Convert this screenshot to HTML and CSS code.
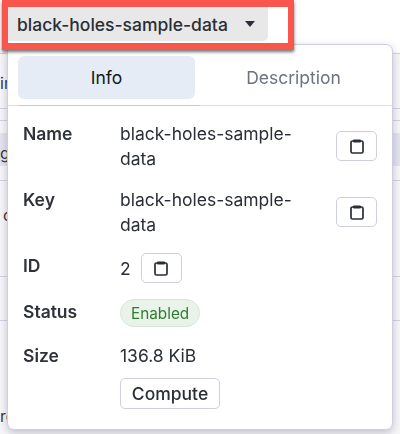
FILE: index.html
```html
<!DOCTYPE html>
<html lang="en">
<head>
<meta charset="utf-8">
<title>black-holes-sample-data</title>
<link rel="stylesheet" href="styles.css">
</head>
<body>
<div class="page">
  <div class="bg-row bg-a"><span>ir</span></div>
  <div class="bg-row bg-b"></div>
  <div class="bg-row bg-c"><span class="bg-stripe">gu</span></div>
  <div class="bg-row bg-d"><span class="bg-indent">c</span></div>
  <div class="bg-row bg-e"></div>
  <div class="bg-row bg-f"><span>rc</span></div>
</div>

<div class="annotation">
  <button class="trigger" type="button">
    <span>black-holes-sample-data</span>
    <svg class="caret" width="10" height="6" viewBox="0 0 10 6"><path d="M0 0h10L5 6z" fill="#2a2e36"/></svg>
  </button>
</div>

<section class="popover">
  <div class="tabs">
    <div class="tab tab-active">Info</div>
    <div class="tab">Description</div>
  </div>
  <dl class="info">
    <dt class="label">Name</dt>
    <dd class="value value-wrap">
      <span class="wrap-text">black-holes-sample-data</span>
      <button class="copy" type="button"><svg class="clip" width="14" height="15" viewBox="0 0 14 15"><rect x="1" y="2" width="12" height="12" rx="1.500" fill="none" stroke="#2a2e36" stroke-width="1.700"/><rect x="3" y="0.500" width="8" height="3" rx="1" fill="#2a2e36"/></svg></button>
    </dd>
    <dt class="label">Key</dt>
    <dd class="value value-wrap">
      <span class="wrap-text">black-holes-sample-data</span>
      <button class="copy" type="button"><svg class="clip" width="14" height="15" viewBox="0 0 14 15"><rect x="1" y="2" width="12" height="12" rx="1.500" fill="none" stroke="#2a2e36" stroke-width="1.700"/><rect x="3" y="0.500" width="8" height="3" rx="1" fill="#2a2e36"/></svg></button>
    </dd>
    <dt class="label">ID</dt>
    <dd class="value value-id">
      <span>2</span>
      <button class="copy" type="button"><svg class="clip" width="14" height="15" viewBox="0 0 14 15"><rect x="1" y="2" width="12" height="12" rx="1.500" fill="none" stroke="#2a2e36" stroke-width="1.700"/><rect x="3" y="0.500" width="8" height="3" rx="1" fill="#2a2e36"/></svg></button>
    </dd>
    <dt class="label">Status</dt>
    <dd class="value"><span class="badge">Enabled</span></dd>
    <dt class="label">Size</dt>
    <dd class="value value-size">
      <span>136.8 KiB</span>
      <button class="compute" type="button">Compute</button>
    </dd>
  </dl>
</section>
</body>
</html>
```
FILE: styles.css
```css
* { box-sizing: border-box; }
html, body { margin: 0; padding: 0; }
body {
  width: 400px;
  height: 434px;
  overflow: hidden;
  position: relative;
  background: #fff;
  font-family: Inter, "Liberation Sans", sans-serif;
  color: #2a2e36;
  font-size: 17.5px;
  line-height: 25px;
  filter: blur(.35px);
}
button { font-family: inherit; }

/* page behind the popover */
.page { display: flex; flex-direction: column; height: 434px; padding-top: 53px; }
.bg-row { flex: none; border-top: 1px solid #d4d3e4; display: flex; color: #333; font-size: 16px; background: #f7f7fa; }
.bg-a { height: 55px; padding-top: 17px; }
.bg-b { height: 12px; }
.bg-c { height: 60px; padding-top: 12px; }
.bg-stripe { display: block; width: 100%; height: 33px; padding-top: 8px; background: #e4e4ee; }
.bg-d { height: 96px; padding-top: 22px; }
.bg-indent { padding-left: 3px; }
.bg-e { height: 44px; }
.bg-f { height: 114px; padding-top: 83px; }

/* annotated trigger */
.annotation {
  position: absolute;
  z-index: 2;
  left: 2px;
  top: 0;
  width: 292px;
  height: 50px;
  border: solid #f9564d;
  border-width: 7px 6px;
  background: #fff;
  box-shadow: 0 2px 3px rgba(40, 40, 40, .65);
}
.trigger {
  width: 260px;
  height: 34px;
  display: flex;
  align-items: center;
  gap: 17px;
  padding: 0 0 0 9px;
  border: 0;
  border-radius: 0 0 5px 0;
  background: #e8e8e8;
  color: #2a2e36;
  font-size: 17.5px;
  font-weight: 500;
}
.caret { flex: none; }

/* popover */
.popover {
  position: absolute;
  left: 7px;
  top: 44px;
  width: 386px;
  height: 386px;
  background: #fff;
  border: 1px solid #cfcde4;
  border-radius: 7px;
  box-shadow: 0 3px 8px rgba(70, 70, 100, .3);
}
.tabs {
  display: grid;
  grid-template-columns: 177px 1fr;
  padding: 11px 0 6px 10px;
  border-bottom: 1px solid #dddcea;
  height: 61px;
}
.tab { display: flex; align-items: center; justify-content: center; height: 43px; color: #6b7280; border-radius: 6px; }
.tab-active { position: relative; background: #e5ecf5; color: #15171c; }
.tab-active::after {
  content: "";
  position: absolute;
  left: 0;
  right: -5px;
  bottom: -7px;
  height: 1px;
  background: #c9cadd;
}

.info {
  margin: 0;
  padding: 15px 15px 0;
  display: grid;
  grid-template-columns: 97px 1fr;
  row-gap: 16px;
}
.label { font-weight: 600; color: #2f3238; }
.value { margin: 0; }
.value-wrap { display: flex; justify-content: space-between; align-items: flex-start; }
.wrap-text { width: 190px; }
.value-wrap .copy { margin-top: 10px; }
.value-id { display: flex; align-items: center; gap: 10px; }
.copy {
  width: 41px;
  height: 30px;
  padding: 0;
  display: flex;
  align-items: center;
  justify-content: center;
  background: #fff;
  border: 1px solid #cfcde4;
  border-radius: 5px;
}
.badge {
  display: inline-flex;
  align-items: center;
  height: 28px;
  padding: 0 10px;
  border: 1px solid #d5e8d6;
  border-radius: 14px;
  background: #e9f3ea;
  color: #2f7d32;
  font-size: 15.3px;
  vertical-align: top;
}
.value-size { display: flex; flex-direction: column; align-items: flex-start; gap: 10px; }
.compute {
  height: 31px;
  width: 100px;
  padding: 0;
  background: #fff;
  border: 1px solid #cfcde4;
  border-radius: 5px;
  color: #2a2e36;
  font-size: 17.5px;
  font-weight: 500;
}
```
